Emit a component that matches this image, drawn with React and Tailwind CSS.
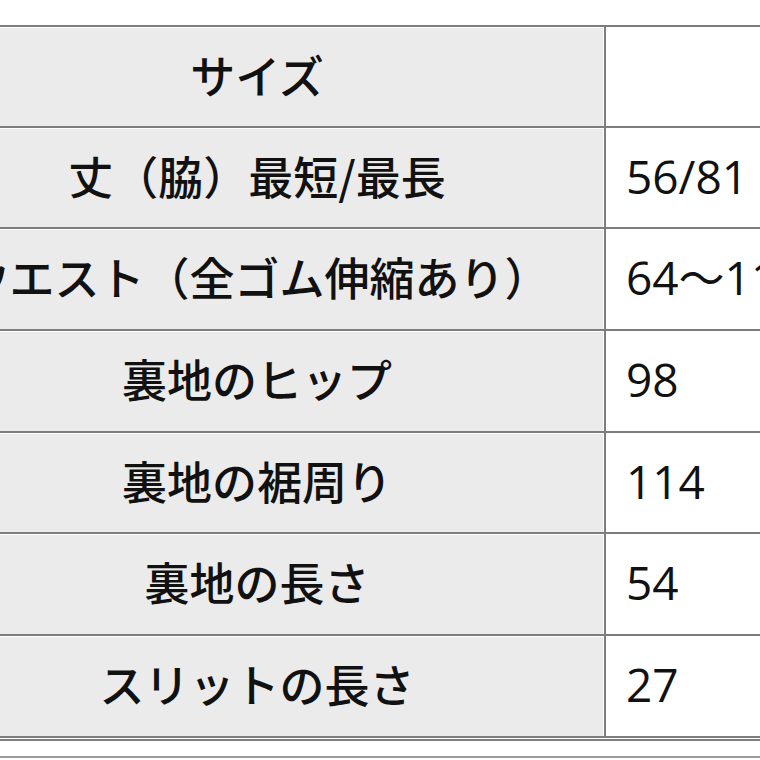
import React from "react";

const rows = [
  { label: "サイズ", value: "", h: "h-[101px]" },
  { label: "丈（脇）最短/最長", value: "56/81", h: "h-[101px]" },
  { label: "ウエスト（全ゴム伸縮あり）", value: "64～110", h: "h-[102px]" },
  { label: "裏地のヒップ", value: "98", h: "h-[102px]" },
  { label: "裏地の裾周り", value: "114", h: "h-[101px]" },
  { label: "裏地の長さ", value: "54", h: "h-[102px]" },
  { label: "スリットの長さ", value: "27", h: "h-[102px]" },
];

export default function App() {
  return (
    <div
      className="w-[760px] h-[760px] overflow-hidden bg-white"
      style={{ fontFamily: '"Open Sans", "Noto Sans CJK JP", sans-serif' }}
    >
      <div className="h-[25px]" />
      <div className="ml-[-89px] w-[1000px] flex flex-col">
        {rows.map((r, i) => (
          <div key={i} className={`flex border-t-2 border-[#7d7d7d] ${r.h}`}>
            <div className="w-[693px] h-full pt-px pr-px bg-white">
              <div className="h-full pb-[5px] bg-[#ebebeb] flex items-center justify-center text-[45px] font-medium text-[#111] whitespace-nowrap" style={{ fontFamily: '"Noto Sans CJK JP", "Open Sans", sans-serif' }}>
                {r.label}
              </div>
            </div>
            <div className="w-[2px] h-full bg-[#7d7d7d]" />
            <div className="flex-1 h-full pb-[3px] bg-white flex items-center pl-[20px] text-[46px] text-[#111] whitespace-nowrap">
              {r.value}
            </div>
          </div>
        ))}
        <div className="border-t-2 border-[#7d7d7d] h-[3px]" />
        <div className="border-t-2 border-[#7d7d7d] h-[17px]" />
        <div className="border-t-2 border-[#9a9a9a]" />
      </div>
    </div>
  );
}
